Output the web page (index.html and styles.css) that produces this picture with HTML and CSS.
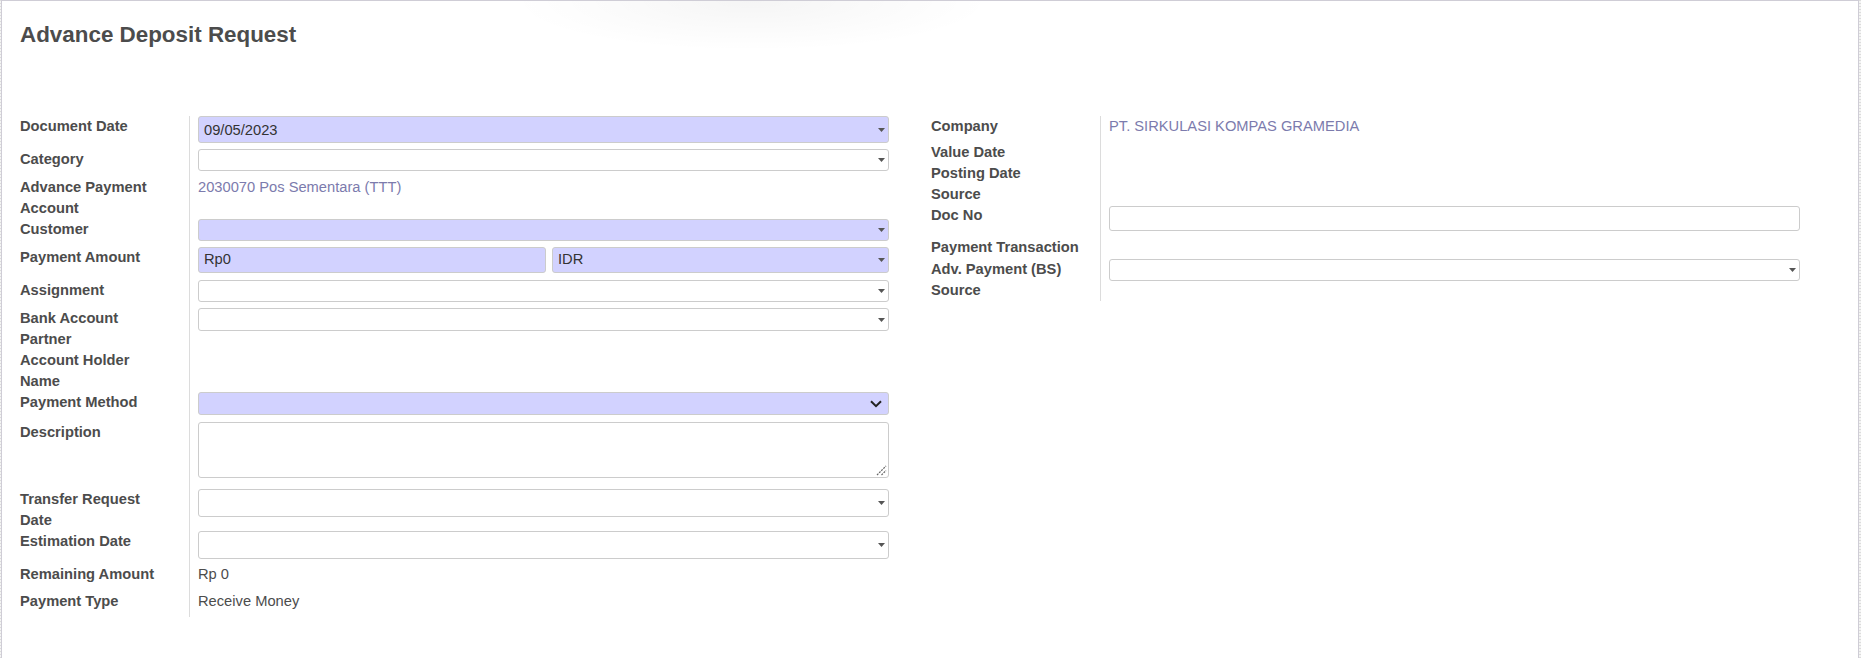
FILE: index.html
```html
<!DOCTYPE html>
<html lang="en">
<head>
<meta charset="utf-8">
<title>Advance Deposit Request</title>
<link rel="stylesheet" href="styles.css">
</head>
<body>
<div class="sheet">
  <div class="top-shadow"></div>
  <h1 class="title">Advance Deposit Request</h1>
  <div class="groups">
    <div class="group">
      <div class="row">
        <div class="lbl">Document Date</div>
        <div class="val"><div class="inp req h27 mb6"><span class="txt-in">09/05/2023</span><svg class="caret" width="7" height="4" viewBox="0 0 7 4"><path d="M0 0H7L3.5 4Z"/></svg></div></div>
      </div>
      <div class="row">
        <div class="lbl">Category</div>
        <div class="val"><div class="inp h22 mb6"><svg class="caret" width="7" height="4" viewBox="0 0 7 4"><path d="M0 0H7L3.5 4Z"/></svg></div></div>
      </div>
      <div class="row">
        <div class="lbl">Advance Payment<br>Account</div>
        <div class="val"><a class="link">2030070 Pos Sementara (TTT)</a></div>
      </div>
      <div class="row">
        <div class="lbl">Customer</div>
        <div class="val"><div class="inp req h22 mb6"><svg class="caret" width="7" height="4" viewBox="0 0 7 4"><path d="M0 0H7L3.5 4Z"/></svg></div></div>
      </div>
      <div class="row">
        <div class="lbl">Payment Amount</div>
        <div class="val">
          <div class="pair mb7">
            <div class="inp req h26 amount"><span class="txt-in up">Rp0</span></div>
            <div class="inp req h26 currency"><span class="txt-in up">IDR</span><svg class="caret" width="7" height="4" viewBox="0 0 7 4"><path d="M0 0H7L3.5 4Z"/></svg></div>
          </div>
        </div>
      </div>
      <div class="row">
        <div class="lbl">Assignment</div>
        <div class="val"><div class="inp h22 mb6"><svg class="caret" width="7" height="4" viewBox="0 0 7 4"><path d="M0 0H7L3.5 4Z"/></svg></div></div>
      </div>
      <div class="row">
        <div class="lbl">Bank Account<br>Partner</div>
        <div class="val"><div class="inp h23"><svg class="caret" width="7" height="4" viewBox="0 0 7 4"><path d="M0 0H7L3.5 4Z"/></svg></div></div>
      </div>
      <div class="row">
        <div class="lbl">Account Holder<br>Name</div>
        <div class="val"></div>
      </div>
      <div class="row">
        <div class="lbl">Payment Method</div>
        <div class="val"><div class="inp req h23 mb7"><svg class="chevron" width="12" height="8" viewBox="0 0 12 8"><path d="M1 1.2L6 6.2L11 1.2"/></svg></div></div>
      </div>
      <div class="row">
        <div class="lbl">Description</div>
        <div class="val"><div class="inp area mb11"><svg class="grip" width="11" height="11" viewBox="0 0 11 11"><path d="M1 10L10 1M5.5 10L10 5.5"/></svg></div></div>
      </div>
      <div class="row">
        <div class="lbl">Transfer Request<br>Date</div>
        <div class="val"><div class="inp h28"><svg class="caret" width="7" height="4" viewBox="0 0 7 4"><path d="M0 0H7L3.5 4Z"/></svg></div></div>
      </div>
      <div class="row">
        <div class="lbl">Estimation Date</div>
        <div class="val"><div class="inp h28 mb5"><svg class="caret" width="7" height="4" viewBox="0 0 7 4"><path d="M0 0H7L3.5 4Z"/></svg></div></div>
      </div>
      <div class="row pb6">
        <div class="lbl">Remaining Amount</div>
        <div class="val"><span class="plain">Rp 0</span></div>
      </div>
      <div class="row pb5">
        <div class="lbl">Payment Type</div>
        <div class="val"><span class="plain">Receive Money</span></div>
      </div>
    </div>

    <div class="group">
      <div class="row pb5">
        <div class="lbl">Company</div>
        <div class="val"><a class="link">PT. SIRKULASI KOMPAS GRAMEDIA</a></div>
      </div>
      <div class="row">
        <div class="lbl">Value Date</div>
        <div class="val"></div>
      </div>
      <div class="row">
        <div class="lbl">Posting Date</div>
        <div class="val"></div>
      </div>
      <div class="row">
        <div class="lbl">Source</div>
        <div class="val"></div>
      </div>
      <div class="row">
        <div class="lbl">Doc No</div>
        <div class="val"><div class="inp h25 mt1 mb6"></div></div>
      </div>
      <div class="row pb1">
        <div class="lbl">Payment Transaction</div>
        <div class="val"></div>
      </div>
      <div class="row">
        <div class="lbl">Adv. Payment (BS)<br>Source</div>
        <div class="val"><div class="inp h22"><svg class="caret" width="7" height="4" viewBox="0 0 7 4"><path d="M0 0H7L3.5 4Z"/></svg></div></div>
      </div>
    </div>
  </div>
</div>
</body>
</html>
```
FILE: styles.css
```css
html, body {
  margin: 0;
  padding: 0;
}
body {
  width: 1861px;
  height: 658px;
  overflow: hidden;
  background: repeating-linear-gradient(0deg, #dcdcdc 0 1px, #f4f4f4 1px 3px);
  font-family: "Liberation Sans", Arial, sans-serif;
  font-size: 14.7px;
  color: #4c4c4c;
}
.sheet {
  position: relative;
  box-sizing: border-box;
  margin: 0 2px 0 1px;
  height: 658px;
  background: #fff;
  border: 1px solid #cfcdd6;
  border-bottom: none;
  padding: 20px 0 0 17px;
}
.top-shadow {
  position: absolute;
  left: 510px;
  top: 0;
  width: 480px;
  height: 50px;
  background: radial-gradient(ellipse 50% 100% at 50% 0, rgba(0, 0, 0, 0.04), rgba(0, 0, 0, 0.015) 60%, rgba(0, 0, 0, 0) 100%);
  pointer-events: none;
}
.title {
  margin: 0 0 68px 1px;
  font-size: 22.4px;
  line-height: 27px;
  font-weight: bold;
  color: #4c4c4c;
}
.groups {
  display: grid;
  grid-template-columns: 870px 870px;
  column-gap: 41px;
  align-items: start;
}
.group {
  display: flex;
  flex-direction: column;
}
.row {
  display: flex;
  align-items: stretch;
}
.row.pb1 { padding-bottom: 1px; }
.row.pb5 { padding-bottom: 5px; }
.row.pb6 { padding-bottom: 6px; }
.row.pb1 .val { margin-bottom: -1px; padding-bottom: 1px; }
.row.pb5 .val { margin-bottom: -5px; padding-bottom: 5px; }
.row.pb6 .val { margin-bottom: -6px; padding-bottom: 6px; }
.lbl {
  flex: none;
  width: 170px;
  box-sizing: border-box;
  padding-left: 1px;
  font-weight: bold;
  line-height: 21px;
  white-space: nowrap;
  color: #4c4c4c;
}
.val {
  flex: 1;
  min-width: 0;
  border-left: 1px solid #dcdcdc;
  padding-left: 8px;
  line-height: 21px;
}
.link {
  color: #7c7bad;
  text-decoration: none;
}
.plain {
  color: #4c4c4c;
}
.inp {
  box-sizing: border-box;
  display: flex;
  align-items: center;
  height: 22px;
  border: 1px solid #cccccc;
  border-radius: 3px;
  background: #fff;
  padding: 0 3px 0 5px;
  color: #333;
}
.inp.req { background: #d2d2ff; }
.h22 { height: 22px; }
.h23 { height: 23px; }
.h25 { height: 25px; }
.h26 { height: 26px; }
.h27 { height: 27px; }
.h28 { height: 28px; }
.mt1 { margin-top: 1px; }
.mb5 { margin-bottom: 5px; }
.mb6 { margin-bottom: 6px; }
.mb7 { margin-bottom: 7px; }
.mb11 { margin-bottom: 11px; }
.txt-in {
  line-height: 20px;
}
.txt-in.up {
  margin-top: -3px;
}
.caret {
  margin-left: auto;
  flex: none;
}
.caret path { fill: #555; }
.chevron {
  margin-left: auto;
  margin-right: 3px;
  flex: none;
}
.chevron path {
  fill: none;
  stroke: #222;
  stroke-width: 2;
}
.pair {
  display: flex;
  gap: 6px;
}
.amount { flex: 0 0 348px; }
.currency { flex: 1; }
.area {
  height: 56px;
  align-items: flex-end;
  justify-content: flex-end;
  padding: 0 1px 1px 0;
}
.grip path {
  fill: none;
  stroke: #666;
  stroke-width: 1.2;
  stroke-dasharray: 2 1;
}
```
